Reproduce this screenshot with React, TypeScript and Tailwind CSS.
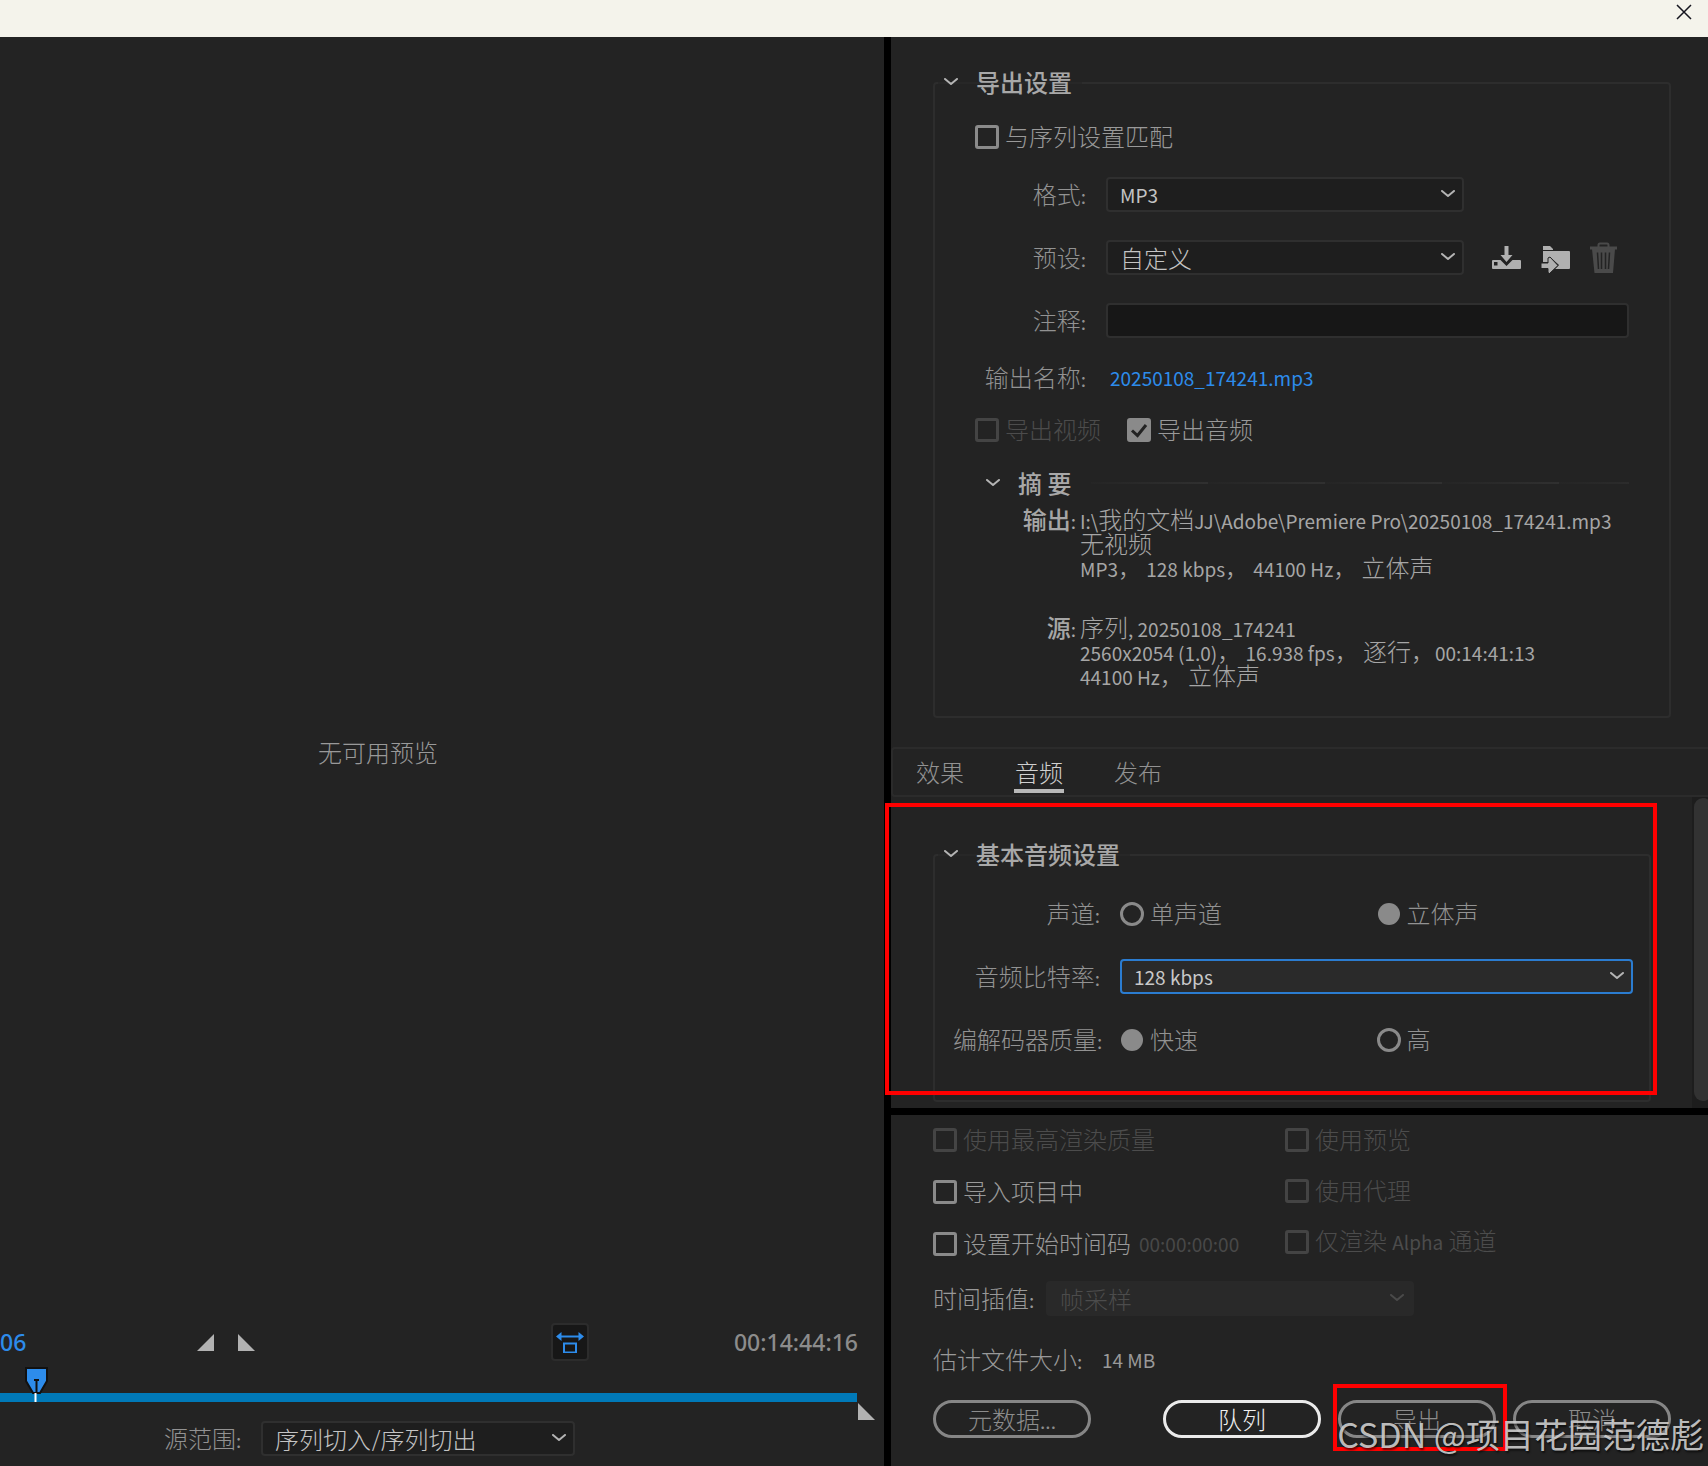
import { useState, type ReactNode } from 'react';
import { clsx } from 'clsx';

const FONT = "font-['Noto_Sans_CJK_SC',sans-serif] font-light";

function Latin({ children }: { children: ReactNode }) {
  return <span className="text-[19px] font-normal">{children}</span>;
}

function Chevron({ className }: { className?: string }) {
  return (
    <svg viewBox="0 0 14 8" className={clsx('w-[14px] h-2 shrink-0', className)} fill="none" stroke="currentColor" strokeWidth="2">
      <path d="M1 1l6 5 6-5" strokeLinecap="round" strokeLinejoin="round" />
    </svg>
  );
}

interface CheckProps {
  label: ReactNode;
  checked?: boolean;
  disabled?: boolean;
}

function Check({ label, checked = false, disabled = false }: CheckProps) {
  return (
    <label
      className={clsx(
        'flex h-6 items-center gap-1.5 leading-6 whitespace-nowrap',
        disabled ? 'text-[#4c4c4c]' : 'text-[#999999]'
      )}
    >
      <span className="relative size-6 shrink-0">
        <input
          type="checkbox"
          defaultChecked={checked}
          disabled={disabled}
          className="peer block size-6 appearance-none rounded-[3px] border-3 border-[#8a8a8a] checked:bg-[#8a8a8a] disabled:border-[#444444]"
        />
        <svg viewBox="0 0 24 24" className="pointer-events-none absolute inset-0 hidden peer-checked:block" fill="none" stroke="#232323" strokeWidth="3">
          <path d="M5 12.500l5.500 5L19 7" />
        </svg>
      </span>
      <span className="pb-0.5">{label}</span>
    </label>
  );
}

interface RadioProps {
  name: string;
  label: string;
  checked?: boolean;
}

function Radio({ name, label, checked = false }: RadioProps) {
  return (
    <label className="flex h-6 items-center gap-1.5 leading-6 text-[#929292]">
      <input
        type="radio"
        name={name}
        defaultChecked={checked}
        className="size-6 shrink-0 appearance-none rounded-full border-3 border-[#8a8a8a] checked:border-1 checked:border-transparent checked:bg-[#8a8a8a] checked:bg-clip-padding"
      />
      <span className="pb-0.5">{label}</span>
    </label>
  );
}

interface DropdownProps {
  id: string;
  options: string[];
  className?: string;
  selectClass?: string;
}

function Dropdown({ id, options, className, selectClass }: DropdownProps) {
  return (
    <div className={clsx('relative', className)}>
      <select
        id={id}
        className={clsx('block h-[35px] w-full appearance-none rounded border-2 pl-3 pr-10 leading-6', selectClass)}
      >
        {options.map((o) => (
          <option key={o}>{o}</option>
        ))}
      </select>
      <Chevron className="pointer-events-none absolute right-[9px] top-[13px] text-[#b4b4b4]" />
    </div>
  );
}

const DARK_SELECT = 'border-[#2f2f2f] bg-[#1e1e1e] text-[#c4c4c4]';

function GroupHeading({ children }: { children: ReactNode }) {
  return (
    <h2 className="flex">
      <button className="-mt-[18px] ml-[3px] flex h-8 items-center bg-[#232323]/60 pl-[6px] pr-[10px] font-medium leading-8 text-[#a8a8a8]">
        <Chevron className="mr-[18px] text-[#b4b4b4]" />
        {children}
      </button>
    </h2>
  );
}

function PresetIcons() {
  return (
    <div className="ml-7 flex items-center gap-5 text-[#b0b0b0]">
      <button aria-label="保存预设">
        <svg viewBox="0 0 29 30" className="block h-[30px] w-[29px]" fill="currentColor">
          <path d="M12.500 3h4v9h4L14.500 19 8.500 12h4z" />
          <path d="M1 17h7.500l6 6 6-6H28q1 0 1 1v7q0 1-1 1H1q-1 0-1-1v-7q0-1 1-1z" />
          <path fill="#232323" d="M2 19h3.500v3.500H2z" />
        </svg>
      </button>
      <button aria-label="导入预设">
        <svg viewBox="0 0 29 30" className="block h-[30px] w-[29px]" fill="currentColor">
          <path d="M2 3h7l3 3v1H2z" />
          <path d="M2 8h26q1 0 1 1v16q0 1-1 1H14l4-4-9-8-2 1v4H2z" />
          <path stroke="#232323" strokeWidth="1" d="M0 20h7v-5l2-1 8 8.500-8.500 8-1.500-1v-4H0z" />
        </svg>
      </button>
      <button aria-label="删除预设" disabled className="text-[#4a4a4a]">
        <svg viewBox="0 0 27 32" className="block h-8 w-[27px]" fill="none" stroke="currentColor">
          <path d="M8.500 5V3q0-1.500 1.500-1.500h7q1.500 0 1.500 1.500v2" strokeWidth="2" />
          <path d="M0 6h27" strokeWidth="3" />
          <path d="M2 7h23l-2 24H4.500z" fill="currentColor" stroke="none" />
          <path d="M7.500 10.500l1 16.500M11.500 10.500V27M15.500 10.500V27M19.500 10.500l-1 16.500" stroke="#232323" strokeWidth="1.500" />
        </svg>
      </button>
    </div>
  );
}

function Field({ label, id, children }: { label: string; id: string; children: ReactNode }) {
  return (
    <div className="flex items-center">
      <label htmlFor={id} className="mr-5 w-[111px] shrink-0 text-right leading-6 whitespace-nowrap text-[#929292]">
        {label}
        <Latin>:</Latin>
      </label>
      {children}
    </div>
  );
}

function SummaryBlock({ label, lines }: { label: string; lines: ReactNode[] }) {
  return (
    <div className="flex text-[#a6a6a6]">
      <dt className="mr-1 h-6 w-[101px] shrink-0 text-right font-medium leading-6">
        {label}
        <Latin>:</Latin>
      </dt>
      <dd>
        {lines.map((line, i) => (
          <p key={i} className="h-6 whitespace-nowrap leading-6">
            {line}
          </p>
        ))}
      </dd>
    </div>
  );
}

function ExportSettings() {
  return (
    <section className="ml-[42px] mr-[37px] mt-[45px] rounded border-2 border-[#2d2d2d] pb-[29px]">
      <GroupHeading>导出设置</GroupHeading>
      <div className="mt-[27px] px-10">
        <div className="flex flex-col gap-7">
          <Check label="与序列设置匹配" />
          <Field label="格式" id="format">
            <Dropdown id="format" options={['MP3']} className="w-[358px]" selectClass={clsx(DARK_SELECT, 'text-[19px] font-normal')} />
          </Field>
          <Field label="预设" id="preset">
            <Dropdown id="preset" options={['自定义']} className="w-[358px]" selectClass={DARK_SELECT} />
            <PresetIcons />
          </Field>
          <Field label="注释" id="comment">
            <input id="comment" type="text" className="h-[35px] min-w-0 flex-1 rounded border-2 border-[#2f2f2f] bg-[#171717] px-3 text-[#c0c0c0]" />
          </Field>
          <div className="flex h-6 items-center">
            <span className="mr-6 w-[111px] shrink-0 text-right leading-6 text-[#929292]">
              输出名称<Latin>:</Latin>
            </span>
            <a href="#output" className="text-[19px] font-normal text-[#2d8ceb]">20250108_174241.mp3</a>
          </div>
          <div className="flex gap-[26px]">
            <Check label="导出视频" disabled />
            <Check label="导出音频" checked />
          </div>
        </div>

        <h3 className="mt-[29px] flex h-6 items-center">
          <button className="ml-[11px] flex items-center gap-[18px] font-medium leading-6 text-[#a8a8a8]">
            <Chevron className="text-[#b4b4b4]" />
            摘 要
          </button>
          <span className="ml-5 h-[2px] flex-1 bg-[repeating-linear-gradient(90deg,#252525_0px,#303030_117px)]" />
        </h3>

        <dl className="mt-3 flex flex-col gap-9">
          <SummaryBlock
            label="输出"
            lines={[
              <><Latin>I:\</Latin>我的文档<Latin>JJ\Adobe\Premiere Pro\20250108_174241.mp3</Latin></>,
              '无视频',
              <><Latin>MP3</Latin>，<Latin> 128 kbps</Latin>，<Latin> 44100 Hz</Latin>，<Latin> </Latin>立体声</>,
            ]}
          />
          <SummaryBlock
            label="源"
            lines={[
              <>序列<Latin>, 20250108_174241</Latin></>,
              <><Latin>2560x2054 (1.0)</Latin>，<Latin> 16.938 fps</Latin>，<Latin> </Latin>逐行，<Latin>00:14:41:13</Latin></>,
              <><Latin>44100 Hz</Latin>，<Latin> </Latin>立体声</>,
            ]}
          />
        </dl>
      </div>
    </section>
  );
}

const TABS = ['效果', '音频', '发布'];

function Tabs() {
  const [active, setActive] = useState('音频');

  return (
    <nav className="mt-[29px] flex h-[50px] gap-[49px] rounded-l border-2 border-r-0 border-[#2b2b2b] pl-[22px]">
      {TABS.map((tab) => (
        <button
          key={tab}
          onClick={() => setActive(tab)}
          className={clsx(
            'h-[44px] w-[50px] border-b-4 pt-[6px] leading-[34px]',
            tab === active ? 'border-[#b8b8b8] text-[#d0d0d0]' : 'border-transparent text-[#929292]'
          )}
        >
          {tab}
        </button>
      ))}
    </nav>
  );
}

function AudioRow({ label, children }: { label: ReactNode; children: ReactNode }) {
  return (
    <div className="flex h-[35px] items-center">
      <span className="mr-5 w-[147px] shrink-0 text-right leading-6 whitespace-nowrap text-[#929292]">
        {label}
        <Latin>:</Latin>
      </span>
      {children}
    </div>
  );
}

function AudioSettings() {
  return (
    <div className="relative flex h-[311px]">
      <section className="mb-[6px] ml-[42px] mr-[41px] mt-[57px] flex-1 rounded border-2 border-[#2d2d2d]">
        <GroupHeading>基本音频设置</GroupHeading>
        <div className="mt-[26px] flex flex-col gap-7 pl-[18px] pr-4">
          <AudioRow label="声道">
            <div className="grid flex-1 grid-cols-2">
              <Radio name="channels" label="单声道" />
              <Radio name="channels" label="立体声" checked />
            </div>
          </AudioRow>
          <AudioRow label={<label htmlFor="bitrate">音频比特率</label>}>
            <Dropdown
              id="bitrate"
              options={['128 kbps']}
              className="flex-1"
              selectClass="border-[#2b7cd0] bg-[#2a2a2a] text-[19px] font-normal text-[#c8c8c8]"
            />
          </AudioRow>
          <AudioRow label="编解码器质量">
            <div className="grid flex-1 grid-cols-2">
              <Radio name="quality" label="快速" checked />
              <Radio name="quality" label="高" />
            </div>
          </AudioRow>
        </div>
      </section>
      <div className="w-4 overflow-hidden bg-[#1d1d1d] pl-[2px]">
        <div className="mt-px h-[303px] w-[18px] rounded-full bg-[#323232]" />
      </div>
      <div className="pointer-events-none absolute -left-[6px] bottom-[13px] right-[51px] top-[6px] border-4 border-[#ff0000]" />
    </div>
  );
}

function PillButton({ children, primary = false }: { children: ReactNode; primary?: boolean }) {
  return (
    <button
      className={clsx(
        'h-[38px] w-[158px] rounded-full border-3 leading-8',
        primary ? 'border-[#ebebeb] text-[#f0f0f0]' : 'border-[#868686] text-[#8c8c8c]'
      )}
    >
      {children}
    </button>
  );
}

function ExportFooter() {
  return (
    <footer className="relative flex-1 pl-[42px] pr-[37px] pt-[13px]">
      <div className="flex">
        <div className="flex w-[352px] shrink-0 flex-col gap-7">
          <Check label="使用最高渲染质量" disabled />
          <Check label="导入项目中" />
          <div className="flex gap-2">
            <Check label="设置开始时间码" />
            <span className="text-[19px] font-normal leading-6 text-[#484848]">00:00:00:00</span>
          </div>
        </div>
        <div className="flex flex-col gap-[27px]">
          <Check label="使用预览" disabled />
          <Check label="使用代理" disabled />
          <Check label={<>仅渲染 <Latin>Alpha</Latin> 通道</>} disabled />
        </div>
      </div>

      <div className="mt-[25px] flex items-center">
        <label htmlFor="interpolation" className="mr-2 w-[105px] whitespace-nowrap leading-6 text-[#999999]">
          时间插值<Latin>:</Latin>
        </label>
        <div className="relative w-[368px]">
          <select id="interpolation" disabled className="block h-[35px] w-full appearance-none rounded bg-[#292929] pl-[14px] leading-6 text-[#4c4c4c]">
            <option>帧采样</option>
          </select>
          <Chevron className="pointer-events-none absolute right-[10px] top-[13px] text-[#4a4a4a]" />
        </div>
      </div>

      <p className="mt-8 flex h-6 items-center leading-6 text-[#999999]">
        <span className="w-[169px]">估计文件大小<Latin>:</Latin></span>
        <Latin>14 MB</Latin>
      </p>

      <div className="mt-7 flex justify-between">
        <PillButton>元数据<Latin>...</Latin></PillButton>
        <div className="flex gap-[17px]">
          <PillButton primary>队列</PillButton>
          <div className="relative">
            <PillButton>导出</PillButton>
            <div className="pointer-events-none absolute -bottom-[13px] -left-[5px] -right-[11px] -top-4 border-4 border-[#ff0000]" />
          </div>
          <PillButton>取消</PillButton>
        </div>
      </div>

      <p className="pointer-events-none absolute bottom-[7px] right-1 whitespace-nowrap text-[34px] font-normal leading-[50px] text-[#d2d2d2]/90 [text-shadow:1px_2px_2px_rgb(0_0_0/0.6)]">
        CSDN @项目花园范德彪
      </p>
    </footer>
  );
}

function PreviewPanel() {
  return (
    <div className="flex min-w-0 flex-col">
      <div className="flex flex-1 items-center justify-center pr-[128px] pt-[144px] text-[#999999]">
        无可用预览
      </div>

      <div className="flex h-[38px] items-center font-['Noto_Sans',sans-serif] text-[23px] font-medium">
        <span className="w-[197px] text-[#2d8ceb]">06</span>
        <button aria-label="设置入点">
          <svg viewBox="0 0 17 17" className="block size-[17px]" fill="#b2b2b2"><path d="M17 0v17H0z" /></svg>
        </button>
        <button aria-label="设置出点" className="ml-6">
          <svg viewBox="0 0 17 17" className="block size-[17px]" fill="#b2b2b2"><path d="M0 0v17h17z" /></svg>
        </button>
        <button aria-label="缩放以适合" className="ml-[296px] flex size-[38px] items-center justify-center rounded border-2 border-[#2c2c2c] bg-[#171717]">
          <svg viewBox="0 0 28 22" className="h-[22px] w-7 shrink-0" fill="none" stroke="#2d8ceb" strokeWidth="2">
            <path d="M3 5.500h22" />
            <path d="M0 5.500L5.500 1v9zM28 5.500L22.500 1v9z" fill="#2d8ceb" stroke="none" />
            <path d="M8 12.500h12v9H8z" />
          </svg>
        </button>
        <span className="ml-auto mr-[26px] text-[#8c8c8c]">00:14:44:16</span>
      </div>

      <div className="relative mt-8 mr-[27px] h-[9px] bg-[#0079b8]">
        <svg viewBox="0 0 23 35" className="absolute -top-[26px] left-[25px] h-[35px] w-[23px]" fill="none">
          <path d="M1 1h21v13l-7 12H8L1 14z" fill="#2d8ceb" stroke="#111111" strokeWidth="2" />
          <path d="M9 13h5M11.500 13v12" stroke="#111111" strokeWidth="2" />
          <path d="M10.500 26v9" stroke="#ffffff" strokeWidth="2" />
        </svg>
        <svg viewBox="0 0 17 17" className="absolute -right-[18px] top-[10px] size-[17px]" fill="#b2b2b2"><path d="M0 0v17h17z" /></svg>
      </div>

      <div className="mb-[10px] mt-[19px] flex items-center pl-[164px]">
        <label htmlFor="range" className="w-[97px] leading-6 text-[#929292]">
          源范围<Latin>:</Latin>
        </label>
        <Dropdown id="range" options={['序列切入/序列切出']} className="w-[314px]" selectClass={DARK_SELECT} />
      </div>
    </div>
  );
}

export default function App() {
  return (
    <div className={clsx('flex min-h-screen flex-col overflow-hidden bg-[#232323] text-[24px]', FONT)}>
      <header className="flex h-[37px] items-start justify-end bg-[#f4f3eb] pr-4 pt-1">
        <button aria-label="关闭">
          <svg viewBox="0 0 16 16" className="block size-4" stroke="#15151f" strokeWidth="1.500"><path d="M1 1l14 14M15 1L1 15" /></svg>
        </button>
      </header>
      <main className="grid flex-1 grid-cols-[884fr_7px_817fr]">
        <PreviewPanel />
        <div className="bg-black" />
        <div className="flex min-w-0 flex-col">
          <ExportSettings />
          <Tabs />
          <AudioSettings />
          <div className="h-[7px] bg-black" />
          <ExportFooter />
        </div>
      </main>
    </div>
  );
}
